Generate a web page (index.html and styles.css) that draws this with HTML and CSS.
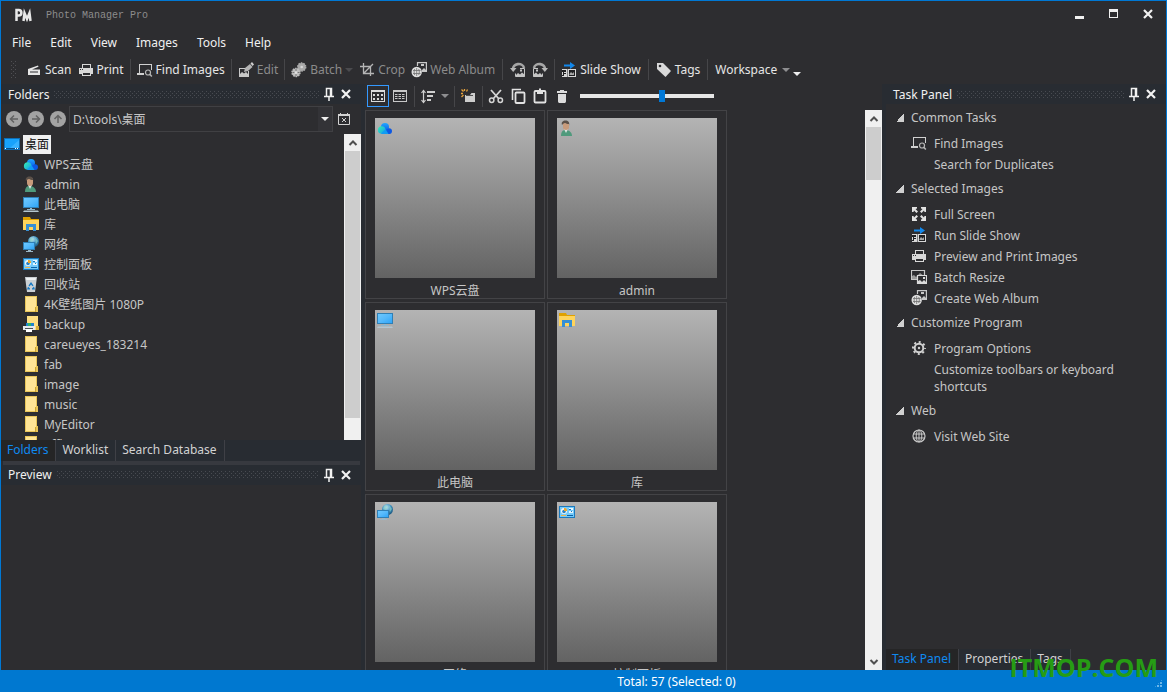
FILE: index.html
```html
<!DOCTYPE html>
<html lang="en">
<head>
<meta charset="utf-8">
<title>Photo Manager Pro</title>
<link rel="stylesheet" href="styles.css">
</head>
<body>
<svg class="defs" aria-hidden="true">
  <defs>
    <linearGradient id="g-sky" x1="0" y1="0" x2="1" y2="1"><stop offset="0" stop-color="#6cc8ff"/><stop offset=".5" stop-color="#55b9fb"/><stop offset="1" stop-color="#2ea5f8"/></linearGradient>
    <linearGradient id="g-teal" x1="0" y1="0" x2="1" y2="1"><stop offset="0" stop-color="#35f0b4"/><stop offset="1" stop-color="#149bea"/></linearGradient>
    <linearGradient id="g-blue" x1="0" y1="0" x2="0" y2="1"><stop offset="0" stop-color="#22a8ff"/><stop offset="1" stop-color="#0a5be8"/></linearGradient>
    <radialGradient id="g-globe" cx=".4" cy=".3" r=".7"><stop offset="0" stop-color="#c8e6f4"/><stop offset=".5" stop-color="#4b9cc7"/><stop offset="1" stop-color="#1d5c85"/></radialGradient>
  </defs>
  <symbol id="scan" viewBox="0 0 16 16"><path d="M2 7 12 3.500l.5 1.200L6 7.500h8V13H2z" fill="#e6e6e6"/><path d="M4 9.500h8v1H4z" fill="#2d2d30"/></symbol>
  <symbol id="print" viewBox="0 0 16 16"><path d="M4 2h9v4h-1V3H5v3H4z" fill="#d8d8d8"/><path d="M1 6h14v6h-2v-2H4v2H1z" fill="#d8d8d8"/><path d="M4 10h9v4H4z M5 11v2h7v-2z" fill="#d8d8d8" fill-rule="evenodd"/><path d="M2 7h1v1H2zM4 7h1v1H4z" fill="#2d2d30"/></symbol>
  <symbol id="find" viewBox="0 0 16 16"><path d="M2 2h13v6h-1V3H3v8h4v2H0v-2h2z" fill="#d0d0d0"/><circle cx="11" cy="10.500" r="2.500" fill="none" stroke="#b8b8b8" stroke-width="1.200"/><path d="m12.800 12.300 2 2.200" stroke="#b8b8b8" stroke-width="1.500"/></symbol>
  <symbol id="edit" viewBox="0 0 16 16"><path d="M1 6h6v1H2v5l2-2 2 1.500 2-1.500 2 2V9h1v6H1z" fill="#c8c8c8"/><path d="M6 10 7 6l5-4 2.500 3-4.500 4z" fill="#b4b4b4"/><path d="m12.500 1.500 1.500-1.500 2 2.500L14.500 4z" fill="#d0d0d0"/></symbol>
  <symbol id="batch" viewBox="0 0 16 16"><circle cx="10.700" cy="5" r="4" fill="#a9a9a9" stroke="#a9a9a9" stroke-width="1.500" stroke-dasharray="1.500 1"/><circle cx="10.700" cy="5" r="1.300" fill="#d6d6d6"/><circle cx="5" cy="10.500" r="4" fill="#bdbdbd" stroke="#bdbdbd" stroke-width="1.500" stroke-dasharray="1.500 1"/><path d="M5 7v7M1.500 10.500h7" stroke="#747474"/><circle cx="5" cy="10.500" r="1.500" fill="#e0e0e0"/></symbol>
  <symbol id="crop" viewBox="0 0 16 16"><path d="M4.500 1v10.500H15M1 4.500h10.500V14M4.500 11.500 14 2" fill="none" stroke="#b5b5b5" stroke-width="1.300"/></symbol>
  <symbol id="webalbum" viewBox="0 0 16 16"><path d="M6.500 4V.6h8.900v8.900H11" fill="none" stroke="#c8c8c8" stroke-width="1.200"/><path d="M10 2h3v2h-3zM11 8l2-2 2 2v1h-4z" fill="#c8c8c8"/><circle cx="5.700" cy="10" r="5.200" fill="#dedede"/><path d="M5.700 6v8M2 8.500h7.500M2 11.500h7.500M3.700 7c-.8 2-.8 4 0 6M7.700 7c.8 2 .8 4 0 6" fill="none" stroke="#707070" stroke-width=".8"/></symbol>
  <symbol id="rotl" viewBox="0 0 16 16"><path d="M3 8C2 1 13 0 14 6" fill="none" stroke="#a6a6a6" stroke-width="2.600"/><path d="M0 6h6.500L3.200 10z" fill="#b8b8b8"/><path d="M10 6.500h4.500v8h-9v-3" fill="none" stroke="#c4c4c4"/><path d="m6 13 2-2 2 1.500 2-2 2.500 2v2.500H6zM10 7.500h2v2h-2z" fill="#c4c4c4"/></symbol>
  <symbol id="slides" viewBox="0 0 16 16"><path d="M3 2.500h6V0l5 3.500L9 7V4.500H3z" fill="#1287ea"/><path d="M1 7h5.500v8H1zM7 7h8v8H7z" fill="#d7d7d7"/><path d="M1 8h4v2H3v1h2v1H3v2H1v-1h1v-3H1zM8 8h6v6H8z" fill="#202022"/><path d="m8.500 12 1.500-2 1.500 1.500L13 10v3H8.500z" fill="#a8a8a8"/></symbol>
  <symbol id="tag" viewBox="0 0 16 16"><path d="M1 1h6l8 8-5.500 6L1 7z" fill="#d9d9d9"/><circle cx="4" cy="4" r="1.300" fill="#2d2d30"/></symbol>
  <symbol id="grid" viewBox="0 0 16 16"><path d="M1 2h14v12H1zM2 4v9h12V4z" fill="#dadada" fill-rule="evenodd"/><path d="M3 6h2v2H3zM7 6h2v2H7zM11 6h2v2h-2zM3 10h2v2H3zM7 10h2v2H7zM11 10h2v2h-2z" fill="#dadada"/></symbol>
  <symbol id="list" viewBox="0 0 16 16"><path d="M1 2h14v12H1zM2 4v9h12V4z" fill="#c8c8c8" fill-rule="evenodd"/><path d="M3 6.500h10M3 8.500h10M3 10.500h10" stroke="#c8c8c8" stroke-dasharray="2.500 1"/></symbol>
  <symbol id="sort" viewBox="0 0 16 16"><path d="M3.500 3v11M1.500 5l2-2.500 2 2.500M1.500 12l2 2.500 2-2.500" fill="none" stroke="#cfcfcf" stroke-width="1.200"/><path d="M7 3h8v2H7zM7 7h6v2H7zM7 11h4v2H7z" fill="#cfcfcf"/></symbol>
  <symbol id="newfolder" viewBox="0 0 16 16"><path d="M5 7h5l1.500-2H15v9H5z" fill="#cdcdcd"/><path d="M6 7.500h7" stroke="#505050"/><path d="m1.500 1.500 2 2M4.500 1v2M7.500 1.500l-1 2M1 5.500h2M1.500 9l2-2" stroke="#e6a23c" stroke-width="1.300"/></symbol>
  <symbol id="cut" viewBox="0 0 16 16"><path d="M3 2l8 9M13 2l-8 9" stroke="#d5d5d5" stroke-width="1.800"/><circle cx="3.700" cy="12.300" r="2.200" fill="none" stroke="#d5d5d5" stroke-width="1.500"/><circle cx="12.300" cy="12.300" r="2.200" fill="none" stroke="#d5d5d5" stroke-width="1.500"/></symbol>
  <symbol id="copy" viewBox="0 0 16 16"><path d="M2.500 12V1.500H11" fill="none" stroke="#e2e2e2" stroke-width="1.600"/><rect x="5.500" y="4.500" width="9" height="10.500" rx="1" fill="none" stroke="#e2e2e2" stroke-width="1.800"/></symbol>
  <symbol id="paste" viewBox="0 0 16 16"><rect x="2.500" y="3" width="11" height="11.500" rx="1" fill="none" stroke="#e2e2e2" stroke-width="1.800"/><path d="M5 2h2V.5h2V2h2v4H5z" fill="#e2e2e2"/></symbol>
  <symbol id="trash" viewBox="0 0 16 16"><path d="M3 3h3V2h4v1h3v2H3zM4 6h8v7c0 1.500-.5 2-2 2H6c-1.500 0-2-.5-2-2z" fill="#dcdcdc"/></symbol>
  <symbol id="pin" viewBox="0 0 16 16"><path d="M5.500 10V2.500h5V10M3 10.500h10M8 10v5M9.500 2.500V10" fill="none" stroke="#f2f2f2" stroke-width="1.500"/></symbol>
  <symbol id="close" viewBox="0 0 16 16"><path d="m4 4 8 8m0-8-8 8" stroke="#f2f2f2" stroke-width="2.200"/></symbol>
  <symbol id="min" viewBox="0 0 16 16"><path d="M3 10h9v3H3z" fill="#f0f0f0"/></symbol>
  <symbol id="max" viewBox="0 0 16 16"><path d="M3 3h9v9H3zM4 6v5h7V6z" fill="#f0f0f0" fill-rule="evenodd"/></symbol>
  <symbol id="circ" viewBox="0 0 16 16"><circle cx="8" cy="8" r="8" fill="#a3a3a3"/><path d="M12 8H4.500M8 4.500 4.500 8 8 11.500" fill="none" stroke="#626262" stroke-width="1.500"/></symbol>
  <symbol id="clear" viewBox="0 0 16 16"><path d="M2.500 4.500h11v9h-11z" fill="none" stroke="#d2d2d2"/><path d="M2 3h2V2h1v1h6V2h1v1h2v2H2z" fill="#d2d2d2"/><path d="m6 7 4 4m0-4-4 4" stroke="#d2d2d2"/></symbol>
  <symbol id="up" viewBox="0 0 16 16"><path d="m4.500 10 3.500-3.500 3.500 3.500" fill="none" stroke="#505050" stroke-width="2"/></symbol>
  <symbol id="full" viewBox="0 0 16 16"><path d="M1 1h5v1.500L4.500 3 7 5.500 5.500 7 3 4.500 2.500 6H1zM15 1h-5v1.500l1.500.5L9 5.500 10.500 7 13 4.500l.5 1.500H15zM1 15h5v-1.500L4.500 13 7 10.500 5.500 9 3 11.500 2.500 10H1zM15 15h-5v-1.500l1.500-.5L9 10.500 10.500 9l2.500 2.500.5-1.500H15z" fill="#e2e2e2"/></symbol>
  <symbol id="resize" viewBox="0 0 16 16"><path d="M.5 1.500h13v9H.5z" fill="none" stroke="#c8c8c8" stroke-width="1.200"/><path d="M1 10V7l2-1 2 2 4-4 4 3v3z" fill="#9a9a9a"/><path d="M6.500 6.500h9v8h-9z" fill="#2d2d30" stroke="#dadada" stroke-width="1.200"/><path d="m7 12 2-1 2 2 2-2 2 2v1H7zM12 8h2v2h-2z" fill="#dadada"/></symbol>
  <symbol id="gear" viewBox="0 0 16 16"><circle cx="8" cy="8" r="4.300" fill="none" stroke="#d0d0d0" stroke-width="2"/><circle cx="8" cy="8" r="6" fill="none" stroke="#d0d0d0" stroke-width="2" stroke-dasharray="2 2.712" stroke-dashoffset="1"/><circle cx="8" cy="8" r="1.200" fill="#d0d0d0"/></symbol>
  <symbol id="globe" viewBox="0 0 16 16"><circle cx="8" cy="8" r="6" fill="none" stroke="#c8c8c8" stroke-width="1.200"/><ellipse cx="8" cy="8" rx="2.800" ry="6" fill="none" stroke="#c8c8c8"/><path d="M8 2v12M2.500 6h11M2.500 10h11" stroke="#c8c8c8"/></symbol>
  <symbol id="desktop" viewBox="0 0 16 16"><path d="M0 2h16v12H0z" fill="#0d6fb8"/><path d="M1 3h14v9H1z" fill="#18a2fb"/><path d="M15 4v8H6z" fill="#38b2ff"/><path d="M1 12h14v1H1z" fill="#0b4f86"/><path d="M1 12h1v1H1zM11 12h1v1h-1zM13 12h1v1h-1z" fill="#fff"/></symbol>
  <symbol id="cloud" viewBox="0 0 16 16"><circle cx="8" cy="7" r="4" fill="url(#g-blue)"/><path d="M8 13c1-6 7-6 7-2 0 2-1 3-2.500 3H5z" fill="#0c58e4"/><circle cx="4.700" cy="10" r="3.800" fill="url(#g-teal)"/><path d="M4 13.500 8.500 9l3 5H5z" fill="#109cf2"/></symbol>
  <symbol id="user" viewBox="0 0 16 16"><path d="M2 16c0-3 1-6 4-6 5 0 7 3 7 6z" fill="#4f9a7c"/><path d="m5 9 2 4 2-4z" fill="#dfe6e4"/><path d="M4 3c0-2 6-2 6 0v4c0 2-1 3-3 3S4 9 4 7z" fill="#c89b7b"/><path d="M3 5C2 2 4 .5 6.500.5S11 2 10 6V4c-2 0-3-.5-4-1-1.500 0-2 1-3 2z" fill="#5a5048"/></symbol>
  <symbol id="pc" viewBox="0 0 16 16"><path d="M0 1h16v11H0z" fill="#2f7fb5"/><path d="M1 2h14v9H1z" fill="url(#g-sky)"/><path d="M7 12h2v1H7zM4 13h8v1H4z" fill="#8fb6cc"/><path d="M1 14.500h14l1 1.500H0z" fill="#b4c6d0"/></symbol>
  <symbol id="library" viewBox="0 0 16 16"><path d="M0 1h7l1 2h8v11H0z" fill="#e0a100"/><path d="M0 4h16v10H0z" fill="#ffd45c"/><path d="M3 15V8h10v7h-3v-4H6v4z" fill="#378fd4"/></symbol>
  <symbol id="network" viewBox="0 0 16 16"><circle cx="10.500" cy="5.500" r="5.500" fill="url(#g-globe)"/><path d="m8 1 3 2-2 3-3-1M12 1l3 4-2 3" fill="#8ed4c6" opacity=".6"/><path d="M0 6h12v8H0z" fill="#2f7fb5"/><path d="M1 7h10v6H1z" fill="url(#g-sky)"/><path d="M5 14h3v1H5zM3 15h7v1H3z" fill="#9cb7c6"/></symbol>
  <symbol id="control" viewBox="0 0 16 16"><path d="M0 2h16v12H0z" fill="#1c79bd"/><path d="M1 3h14v10H1z" fill="#74cbfb"/><circle cx="5" cy="7" r="3" fill="#f5f8fa"/><path d="M5 7V4a3 3 0 0 1 3 3z" fill="#f09c24"/><circle cx="5" cy="7.500" r="1.800" fill="#2b83c5"/><path d="M5 7V4a3 3 0 0 1 3 3z" fill="#f0a82c"/><path d="M10 4h4v2h-4zM10 7h4v2h-4z" fill="#e9f7ff"/><path d="M10 5h2v1h-2zM12 7h1v1h-1z" fill="#1c79bd"/><path d="M2 11h5v1H2z" fill="#f0b44c"/><path d="M8 11h6v1H8z" fill="#0c63a6"/></symbol>
  <symbol id="bin" viewBox="0 0 16 16"><path d="M2 1h12l-2 15H4z" fill="#cbd0d4"/><path d="M3 2h10l-.5 2h-9z" fill="#eef1f3"/><path d="m8 6 2.500 3.500-1 .8L8 8.500 6.500 10.500l-1-1zM5 10.500l2 2v1H4zM11 10.500l1 3H9v-1z" fill="#1678c4"/></symbol>
  <symbol id="folder" viewBox="0 0 16 16"><path d="M2 0h12v10h1v6H2z" fill="#e9c558"/><path d="M3 1h10v14H3z" fill="#ffe596"/><path d="M12 11h1v5h-1z" fill="#cda52e"/></symbol>
  <symbol id="backup" viewBox="0 0 16 16"><path d="M4 0h11v14H4z" fill="#ffdf82"/><path d="M13 10h3v4h-3z" fill="#d9b03c"/><path d="M3 7h8v4H3z" fill="#2283cf"/><path d="M5 7h3v3H5z" fill="#2eb36a"/><path d="M0 10h12v4H0z" fill="#e4e8eb"/><path d="M2 12h8v1H2z" fill="#4a4e52"/><path d="M3 13h6v3H3z" fill="#fff"/></symbol>
</svg>

<div class="window">
  <header class="titlebar">
    <svg class="logo" viewBox="0 0 20 16" role="img" aria-label="PM"><path d="M3.500 14V3h2.200c3.600 0 3.600 5.500 0 5.500H4M10.500 14l1-8 2.500 6 2.500-6 1 8" fill="none" stroke="#e8e8e8" stroke-width="2.500"/></svg>
    <h1 class="title">Photo Manager Pro</h1>
    <div class="wincontrols">
      <button aria-label="Minimize"><svg class="icon"><use href="#min"/></svg></button>
      <button aria-label="Maximize"><svg class="icon"><use href="#max"/></svg></button>
      <button aria-label="Close"><svg class="icon"><use href="#close"/></svg></button>
    </div>
  </header>

  <nav class="menubar">
    <button>File</button><button>Edit</button><button>View</button><button>Images</button><button>Tools</button><button>Help</button>
  </nav>

  <div class="toolbar">
    <span class="grip"></span>
    <button><svg class="icon"><use href="#scan"/></svg>Scan</button>
    <button><svg class="icon"><use href="#print"/></svg>Print</button>
    <span class="sep"></span>
    <button><svg class="icon"><use href="#find"/></svg>Find Images</button>
    <span class="sep"></span>
    <button class="dim"><svg class="icon"><use href="#edit"/></svg>Edit</button>
    <span class="sep"></span>
    <button class="dim"><svg class="icon"><use href="#batch"/></svg>Batch<i class="caret faint"></i></button>
    <button class="dim"><svg class="icon"><use href="#crop"/></svg>Crop</button>
    <button class="dim"><svg class="icon"><use href="#webalbum"/></svg>Web Album</button>
    <span class="sep wide"></span>
    <button aria-label="Rotate left"><svg class="icon"><use href="#rotl"/></svg></button>
    <button aria-label="Rotate right"><svg class="icon flip"><use href="#rotl"/></svg></button>
    <span class="sep"></span>
    <button><svg class="icon"><use href="#slides"/></svg>Slide Show</button>
    <span class="sep wide"></span>
    <button><svg class="icon"><use href="#tag"/></svg>Tags</button>
    <span class="sep wide"></span>
    <button>Workspace<i class="caret"></i></button>
    <button class="overflow" aria-label="Toolbar options"><i class="caret bright"></i></button>
  </div>

  <main class="main">
    <aside class="left">
      <section class="folders">
        <header class="panehead"><h2>Folders</h2><span class="dots"></span>
          <button aria-label="Pin"><svg class="icon"><use href="#pin"/></svg></button><button aria-label="Close pane"><svg class="icon"><use href="#close"/></svg></button></header>
        <div class="address">
          <button aria-label="Back"><svg class="icon"><use href="#circ"/></svg></button>
          <button aria-label="Forward"><svg class="icon flip"><use href="#circ"/></svg></button>
          <button aria-label="Up"><svg class="icon turn"><use href="#circ"/></svg></button>
          <div class="combo"><input type="text" aria-label="Folder path" value="D:\tools\桌面"><button aria-label="Show paths"><i class="caret bright"></i></button></div>
          <button aria-label="Clear"><svg class="icon"><use href="#clear"/></svg></button>
        </div>
        <div class="treebox">
          <ul class="tree">
            <li class="root"><svg class="icon"><use href="#desktop"/></svg><span class="sel">桌面</span></li>
            <li><svg class="icon"><use href="#cloud"/></svg><span>WPS云盘</span></li>
            <li><svg class="icon"><use href="#user"/></svg><span>admin</span></li>
            <li><svg class="icon"><use href="#pc"/></svg><span>此电脑</span></li>
            <li><svg class="icon"><use href="#library"/></svg><span>库</span></li>
            <li><svg class="icon"><use href="#network"/></svg><span>网络</span></li>
            <li><svg class="icon"><use href="#control"/></svg><span>控制面板</span></li>
            <li><svg class="icon"><use href="#bin"/></svg><span>回收站</span></li>
            <li><svg class="icon"><use href="#folder"/></svg><span>4K壁纸图片 1080P</span></li>
            <li><svg class="icon"><use href="#backup"/></svg><span>backup</span></li>
            <li><svg class="icon"><use href="#folder"/></svg><span>careueyes_183214</span></li>
            <li><svg class="icon"><use href="#folder"/></svg><span>fab</span></li>
            <li><svg class="icon"><use href="#folder"/></svg><span>image</span></li>
            <li><svg class="icon"><use href="#folder"/></svg><span>music</span></li>
            <li><svg class="icon"><use href="#folder"/></svg><span>MyEditor</span></li>
            <li><svg class="icon"><use href="#folder"/></svg><span>office</span></li>
          </ul>
          <div class="scroll"><button aria-label="Scroll up"><svg class="icon"><use href="#up"/></svg></button><span class="thumb long"></span></div>
        </div>
        <div class="tabs">
          <button class="on">Folders</button><button>Worklist</button><button>Search Database</button>
        </div>
      </section>
      <section class="preview">
        <div class="splitter"></div>
        <header class="panehead"><h2>Preview</h2><span class="dots"></span>
          <button aria-label="Pin"><svg class="icon"><use href="#pin"/></svg></button><button aria-label="Close pane"><svg class="icon"><use href="#close"/></svg></button></header>
        <div class="canvas"></div>
      </section>
    </aside>

    <section class="center">
      <div class="viewbar">
        <button class="active" aria-label="Thumbnails"><svg class="icon"><use href="#grid"/></svg></button>
        <button aria-label="Details"><svg class="icon"><use href="#list"/></svg></button>
        <span class="sep"></span>
        <button class="drop" aria-label="Sort"><svg class="icon"><use href="#sort"/></svg><i class="caret"></i></button>
        <span class="sep"></span>
        <button aria-label="New folder"><svg class="icon"><use href="#newfolder"/></svg></button>
        <span class="sep"></span>
        <button aria-label="Cut"><svg class="icon"><use href="#cut"/></svg></button>
        <button aria-label="Copy"><svg class="icon"><use href="#copy"/></svg></button>
        <button aria-label="Paste"><svg class="icon"><use href="#paste"/></svg></button>
        <button aria-label="Delete"><svg class="icon"><use href="#trash"/></svg></button>
        <input class="zoom" type="range" min="0" max="100" value="62" aria-label="Thumbnail size">
      </div>
      <div class="browser">
        <div class="thumbs">
          <figure><div class="pic"><svg class="icon"><use href="#cloud"/></svg></div><figcaption>WPS云盘</figcaption></figure>
          <figure><div class="pic"><svg class="icon"><use href="#user"/></svg></div><figcaption>admin</figcaption></figure>
          <figure><div class="pic"><svg class="icon"><use href="#pc"/></svg></div><figcaption>此电脑</figcaption></figure>
          <figure><div class="pic"><svg class="icon"><use href="#library"/></svg></div><figcaption>库</figcaption></figure>
          <figure><div class="pic"><svg class="icon"><use href="#network"/></svg></div><figcaption>网络</figcaption></figure>
          <figure><div class="pic"><svg class="icon"><use href="#control"/></svg></div><figcaption>控制面板</figcaption></figure>
        </div>
        <div class="scroll"><button aria-label="Scroll up"><svg class="icon"><use href="#up"/></svg></button><span class="thumb"></span><button class="down" aria-label="Scroll down"><svg class="icon half"><use href="#up"/></svg></button></div>
      </div>
    </section>

    <aside class="right">
      <header class="panehead"><h2>Task Panel</h2><span class="dots"></span>
        <button aria-label="Pin"><svg class="icon"><use href="#pin"/></svg></button><button aria-label="Close pane"><svg class="icon"><use href="#close"/></svg></button></header>
      <div class="tasks">
        <h3>Common Tasks</h3>
        <ul>
          <li><svg class="icon"><use href="#find"/></svg><a href="#">Find Images</a></li>
          <li><span class="icon"></span><a href="#">Search for Duplicates</a></li>
        </ul>
        <h3>Selected Images</h3>
        <ul>
          <li><svg class="icon"><use href="#full"/></svg><a href="#">Full Screen</a></li>
          <li><svg class="icon"><use href="#slides"/></svg><a href="#">Run Slide Show</a></li>
          <li><svg class="icon"><use href="#print"/></svg><a href="#">Preview and Print Images</a></li>
          <li><svg class="icon"><use href="#resize"/></svg><a href="#">Batch Resize</a></li>
          <li><svg class="icon"><use href="#webalbum"/></svg><a href="#">Create Web Album</a></li>
        </ul>
        <h3>Customize Program</h3>
        <ul>
          <li><svg class="icon"><use href="#gear"/></svg><a href="#">Program Options</a></li>
          <li><span class="icon"></span><a href="#">Customize toolbars or keyboard shortcuts</a></li>
        </ul>
        <h3>Web</h3>
        <ul>
          <li><svg class="icon"><use href="#globe"/></svg><a href="#">Visit Web Site</a></li>
        </ul>
      </div>
      <div class="tabs">
        <button class="on">Task Panel</button><button>Properties</button><button>Tags</button>
      </div>
    </aside>
  </main>

  <footer class="status"><span>Total: 57 (Selected: 0)</span><i class="sizegrip"></i></footer>
  <div class="watermark">ITMOP.COM</div>
</div>
</body>
</html>
```

FILE: styles.css
```css
* { box-sizing: border-box; }
body {
  margin: 0;
  background: #2d2d30;
  color: #c6c6c6;
  font: 12px/17px "Noto Sans", "Noto Sans CJK SC", sans-serif;
}
button, input { font: inherit; color: inherit; background: none; border: 0; padding: 0; margin: 0; }
button { display: flex; align-items: center; white-space: nowrap; }
h1, h2, h3, ul, figure { margin: 0; padding: 0; font-size: inherit; font-weight: 400; }
ul { list-style: none; }
a { color: inherit; text-decoration: none; }
.defs { position: absolute; width: 0; height: 0; }
.icon { width: 16px; height: 16px; flex: none; display: block; }
.flip { transform: scaleX(-1); }
.turn { transform: rotate(90deg); }
.half { transform: rotate(180deg); }

.window {
  position: relative;
  display: flex;
  flex-direction: column;
  height: 100vh;
  border: 1px solid #0078d4;
  border-bottom: 0;
}
.titlebar { display: flex; align-items: center; height: 28px; padding: 0 10px 0 12px; flex: none; }
.logo { width: 20px; height: 16px; }
.title { margin-left: 13px; padding-top: 2px; font: 10px/16px "Liberation Mono", monospace; color: #8c8c8c; }
.wincontrols { display: flex; gap: 18px; margin-left: auto; padding-bottom: 2px; }

.menubar { display: flex; gap: 19px; height: 27px; padding-left: 11px; flex: none; color: #f0f0f0; }

.toolbar { display: flex; align-items: center; height: 28px; gap: 6px; padding: 0 0 1px 10px; flex: none; color: #e6e6e6; }
.toolbar button { gap: 3px; }
.toolbar .dim { color: #8b8b8b; }
.grip {
  width: 5px; height: 18px; margin-right: 4px;
  background: conic-gradient(from 270deg at 1px 1px, #505054 90deg, transparent 0) 0 0 / 4px 4px, conic-gradient(from 270deg at 1px 1px, #505054 90deg, transparent 0) 2px 2px / 4px 4px;
}
.sep { width: 1px; height: 21px; background: #464649; }
.sep.wide { margin: 0 1px; }
.caret { width: 0; height: 0; border: 4px solid transparent; border-top: 4px solid #8e8e90; border-bottom: 0; }
.toolbar .caret { margin-left: 2px; }
.toolbar .faint { margin-left: 0; border-top-color: #4b4b4e; }
.caret.bright { border-top-color: #eee; }
.toolbar .overflow { padding-top: 8px; }
.toolbar .overflow .caret { margin-left: -3px; }

.main { display: flex; flex: 1; min-height: 0; }
.left { display: flex; flex-direction: column; width: 364px; flex: none; background: #282c32; padding-right: 4px; }
.folders { display: flex; flex-direction: column; flex: 9 1 0; min-height: 0; }
.preview { display: flex; flex-direction: column; flex: 5 1 0; }
.splitter { height: 4px; margin: 0 1px 0 2px; background: #37393f; flex: none; }
.canvas { flex: 1; background: #2d2d30; }
.panehead { display: flex; align-items: center; height: 20px; padding: 0 7px; flex: none; background: #282c32; color: #f0f0f0; }
.panehead .dots {
  flex: 1; height: 7px; margin: 0 2px 0 5px;
  background:
    conic-gradient(from 270deg at 1px 1px, #484b51 90deg, transparent 0) 0 0 / 4px 4px,
    conic-gradient(from 270deg at 1px 1px, #484b51 90deg, transparent 0) 2px 2px / 4px 4px;
}
.panehead button + button { margin-left: 1px; }

.address { display: flex; align-items: center; gap: 6px; height: 30px; padding: 0 9px 0 5px; flex: none; background: #2d2d30; }
.combo { display: flex; flex: 1; height: 26px; margin: 0 -3px; border: 1px solid #404043; }
.combo input { flex: 1; min-width: 0; padding: 0 3px; }
.combo button { width: 14px; justify-content: center; background: #333337; }
.treebox { display: flex; flex: 1; min-height: 0; background: #2d2d30; }
.tree { flex: 1; overflow: hidden; }
.tree li { display: flex; align-items: center; gap: 5px; height: 20px; padding-left: 22px; }
.tree .root { padding-left: 3px; gap: 3px; }
.sel { padding: 1px 2px; background: #f0f0f0; color: #111; }

.scroll { display: flex; flex-direction: column; width: 17px; flex: none; background: #f0f0f0; }
.scroll button { height: 17px; justify-content: center; }
.thumb { height: 53px; margin: 0 1px; background: #cdcdcd; }
.thumb.long { flex: 1; margin-bottom: 22px; }
.scroll .down { margin-top: auto; }

.tabs { display: flex; flex: none; height: 21px; background: #282c32; color: #d2d2d2; }
.tabs button { padding: 0 7px 2px 6px; border-right: 1px solid #3f4046; background: #282c32; }
.tabs .on { background: #252526; color: #0f8af0; }

.center { display: flex; flex-direction: column; flex: 1; min-width: 0; }
.viewbar { display: flex; align-items: center; height: 26px; padding: 0 0 2px 2px; flex: none; }
.viewbar button { height: 22px; width: 22px; justify-content: center; }
.viewbar .active { border: 1px solid #3399ff; }
.viewbar .drop { width: 34px; gap: 5px; }
.viewbar .sep { margin: 0 2px 0 3px; }
.zoom { appearance: none; width: 134px; height: 12px; margin-left: 7px; background: linear-gradient(#e6e6e6, #e6e6e6) center / 100% 4px no-repeat; }
.zoom::-webkit-slider-thumb { appearance: none; width: 6px; height: 12px; background: #0078d7; }
.browser { display: flex; flex: 1; min-height: 0; }
.thumbs {
  display: grid; flex: 1; gap: 3px 2px; overflow: hidden;
  grid-template-columns: repeat(2, 180px);
  grid-auto-rows: 189px;
}
.thumbs figure { padding: 7px 9px; border: 1px solid #434346; }
.pic { height: 160px; padding: 2px; background: linear-gradient(#b4b4b4, #636363); }
.thumbs figcaption { padding-top: 4px; text-align: center; }

.right { display: flex; flex-direction: column; width: 284px; flex: none; padding-left: 4px; background: linear-gradient(90deg, #282c32 4px, #2d2d30 4px); }
.tasks { flex: 1; padding: 3px 12px 0 8px; }
.tasks h3 { display: flex; align-items: center; gap: 7px; height: 21px; padding-left: 2px; }
.tasks h3::before { content: ""; width: 8px; height: 8px; background: linear-gradient(135deg, transparent 50%, #d0d0d0 50%); }
.tasks ul { padding: 5px 0 3px 17px; }
.tasks li { display: flex; gap: 7px; padding: 2px 0; }
.right .tabs { background: #2d2d30; }

.status { display: flex; align-items: center; justify-content: center; position: relative; height: 22px; flex: none; margin: 0 -1px; padding-left: 186px; background: #0078d0; color: #fff; }
.sizegrip {
  position: absolute; right: 4px; bottom: 4px; width: 9px; height: 9px;
  background: conic-gradient(from 270deg at 2px 2px, #6db7ea 90deg, transparent 0) 0 0 / 3px 3px;
  clip-path: polygon(100% 0, 100% 100%, 0 100%);
}
.watermark {
  position: absolute; right: 8px; bottom: 8px;
  color: #269c14; font: 700 25px/33px "Open Sans", sans-serif; pointer-events: none;
}
```
